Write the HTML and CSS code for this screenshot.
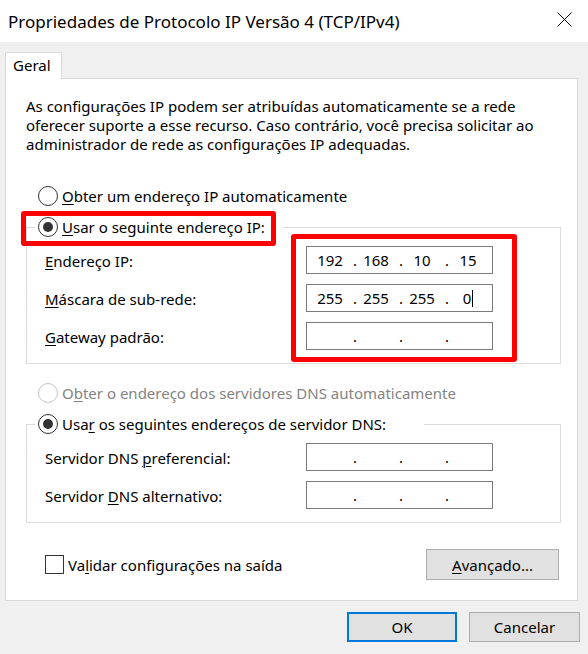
FILE: index.html
```html
<!DOCTYPE html>
<html lang="pt-BR">
<head>
<meta charset="utf-8">
<title>Propriedades de Protocolo IP Versão 4 (TCP/IPv4)</title>
<link rel="stylesheet" href="styles.css">
</head>
<body>
<div class="titlebar">
  <span class="title">Propriedades de Protocolo IP Versão 4 (TCP/IPv4)</span>
  <svg class="close" width="15" height="15" viewBox="0 0 15 15"><path d="M0.5 0.5 L14.5 14.5 M14.5 0.5 L0.5 14.5" stroke="#000" stroke-width="1" fill="none"/></svg>
</div>
<div class="tabs"><div class="tab">Geral</div></div>
<div class="panel">
  <p class="desc">As configurações IP podem ser atribuídas automaticamente se a rede<br>oferecer suporte a esse recurso. Caso contrário, você precisa solicitar ao<br>administrador de rede as configurações IP adequadas.</p>

  <div class="radio-row first"><span class="radio"></span><span><u>O</u>bter um endereço IP automaticamente</span></div>

  <fieldset class="group group-ip">
    <legend class="legend"><span class="legend-inner legend-ip"><span class="radio checked"></span><span><u>U</u>sar o seguinte endereço IP:</span></span></legend>
    <div class="row"><span class="label"><u>E</u>ndereço IP:</span>
      <div class="ipbox"><span class="oct">192</span><span class="sep">.</span><span class="oct">168</span><span class="sep">.</span><span class="oct">10</span><span class="sep">.</span><span class="oct">15</span></div></div>
    <div class="row"><span class="label"><u>M</u>áscara de sub-rede:</span>
      <div class="ipbox"><span class="oct">255</span><span class="sep">.</span><span class="oct">255</span><span class="sep">.</span><span class="oct">255</span><span class="sep">.</span><span class="oct">0<span class="caret"></span></span></div></div>
    <div class="row"><span class="label"><u>G</u>ateway padrão:</span>
      <div class="ipbox"><span class="oct"></span><span class="sep">.</span><span class="oct"></span><span class="sep">.</span><span class="oct"></span><span class="sep">.</span><span class="oct"></span></div></div>
  </fieldset>

  <div class="radio-row dns-auto"><span class="radio disabled"></span><span class="disabled-text">O<u>b</u>ter o endereço dos servidores DNS automaticamente</span></div>

  <fieldset class="group group-dns">
    <legend class="legend"><span class="legend-inner legend-dns"><span class="radio checked"></span><span>Usa<u>r</u> os seguintes endereços de servidor DNS:</span></span></legend>
    <div class="row"><span class="label">Servidor DNS <u>p</u>referencial:</span>
      <div class="ipbox"><span class="oct"></span><span class="sep">.</span><span class="oct"></span><span class="sep">.</span><span class="oct"></span><span class="sep">.</span><span class="oct"></span></div></div>
    <div class="row"><span class="label">Servidor <u>D</u>NS alternativo:</span>
      <div class="ipbox"><span class="oct"></span><span class="sep">.</span><span class="oct"></span><span class="sep">.</span><span class="oct"></span><span class="sep">.</span><span class="oct"></span></div></div>
  </fieldset>

  <div class="check-row">
    <div class="check"><span class="checkbox"></span><span>Va<u>l</u>idar configurações na saída</span></div>
    <button class="btn btn-adv"><u>A</u>vançado...</button>
  </div>

  <div class="mark mark-radio"></div>
  <div class="mark mark-fields"></div>
</div>
<div class="buttons">
  <button class="btn btn-ok">OK</button>
  <button class="btn btn-cancel">Cancelar</button>
</div>
</body>
</html>
```

FILE: styles.css
```css
* { box-sizing: border-box; }
html, body { margin: 0; padding: 0; }
body {
  width: 588px;
  height: 654px;
  overflow: hidden;
  background: #f0f0f0;
  font-family: "Noto Sans", "Open Sans", sans-serif;
  font-size: 15px;
  color: #000;
}
u { text-decoration-thickness: 1px; text-underline-offset: 2px; }

.titlebar {
  height: 42px;
  background: #fff;
  display: flex;
  align-items: center;
  justify-content: space-between;
  padding: 0 16px 0 8px;
}
.title { font-size: 17px; }
.close { display: block; margin-top: -3px; }

.tabs { display: flex; padding: 10px 0 0 5px; }
.tab {
  position: relative;
  z-index: 1;
  width: 57px;
  height: 27px;
  margin-bottom: -1px;
  background: #fff;
  border: 1px solid #d9d9d9;
  border-bottom: none;
  padding: 2px 0 0 7px;
  line-height: 20px;
}

.panel {
  position: relative;
  margin: 0 10px 0 5px;
  height: 523px;
  background: #fff;
  border: 1px solid #d9d9d9;
  padding: 18px 16px 0 20px;
}
.desc { margin: 0; line-height: 19px; }

.radio-row {
  display: flex;
  align-items: center;
  gap: 4px;
  height: 20px;
  margin-left: 12px;
  line-height: 20px;
}
.radio-row.first { margin-top: 32px; }
.radio-row.dns-auto { margin-top: 19px; }

.radio {
  flex: none;
  width: 20px;
  height: 20px;
  border: 1px solid #333;
  border-radius: 50%;
  background: #fff;
  display: flex;
  align-items: center;
  justify-content: center;
}
.radio.checked::after {
  content: "";
  width: 10px;
  height: 10px;
  border-radius: 50%;
  background: #333;
}
.radio.disabled { border-color: #c4c4c4; }
.disabled-text { color: #838383; }

.group {
  margin: 11px 0 0;
  padding: 9px 0 13px;
  border: 1px solid #dcdcdc;
  min-width: 0;
}
.legend { margin-left: 8px; padding: 0; }
.legend-inner {
  display: flex;
  align-items: center;
  gap: 4px;
  height: 20px;
  padding-left: 3px;
  line-height: 20px;
  background: #fff;
}
.legend-ip { width: 248px; }
.legend-dns { width: 389px; }

.row {
  display: flex;
  align-items: center;
  height: 28px;
  padding-left: 18px;
}
.row + .row { margin-top: 10px; }
.label { flex: none; width: 261px; line-height: 20px; padding-top: 1px; }

.ipbox {
  flex: none;
  width: 187px;
  height: 28px;
  border: 1px solid #7a7a7a;
  display: flex;
  align-items: center;
  padding-left: 4px;
  line-height: 20px;
}
.oct { width: 38px; text-align: center; }
.sep { width: 8px; text-align: right; }
.caret {
  display: inline-block;
  width: 1px;
  height: 17px;
  margin-left: 1px;
  background: #000;
  vertical-align: -3px;
}

.check-row {
  display: flex;
  align-items: center;
  justify-content: space-between;
  height: 31px;
  margin-top: 26px;
}
.check { display: flex; align-items: center; gap: 4px; margin-left: 19px; }
.checkbox { width: 19px; height: 19px; border: 1px solid #333; background: #fff; }

.btn {
  font-family: inherit;
  font-size: 15px;
  color: #000;
  background: #e1e1e1;
  border: 1px solid #adadad;
  border-radius: 0;
  padding: 0;
  height: 30px;
}
.btn-adv { width: 133px; height: 31px; margin-right: 2px; }

.buttons {
  display: flex;
  justify-content: flex-end;
  gap: 12px;
  margin: 11px 8px 0 0;
}
.btn-ok { width: 110px; border: 2px solid #0078d7; }
.btn-cancel { width: 111px; }

.mark {
  position: absolute;
  border: 5px solid #ff0000;
  border-radius: 3px;
  pointer-events: none;
}
.mark-radio { left: 15px; top: 132px; width: 255px; height: 35px; }
.mark-fields { left: 285px; top: 155px; width: 226px; height: 128px; }
```
